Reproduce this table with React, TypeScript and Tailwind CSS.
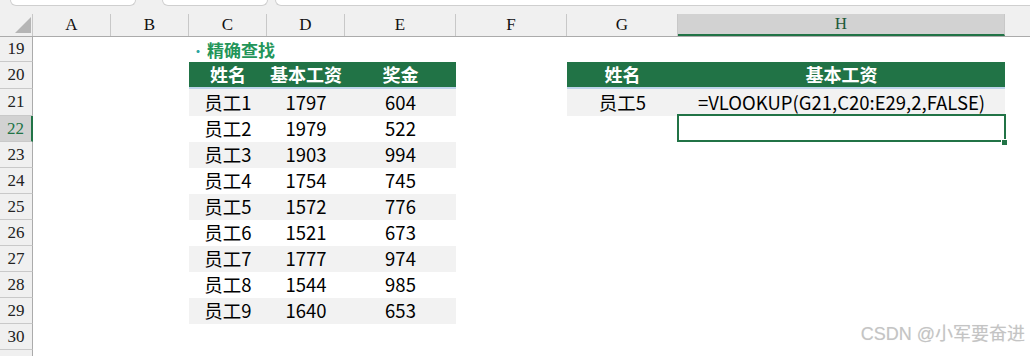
const COLS = [
  { key: "A", w: "w-[78px]" },
  { key: "B", w: "w-[78px]" },
  { key: "C", w: "w-[78px]" },
  { key: "D", w: "w-[78px]" },
  { key: "E", w: "w-[111px]" },
  { key: "F", w: "w-[111px]" },
  { key: "G", w: "w-[111px]" },
  { key: "H", w: "w-[327px]" },
];

const DATA = [
  ["员工1", "1797", "604"],
  ["员工2", "1979", "522"],
  ["员工3", "1903", "994"],
  ["员工4", "1754", "745"],
  ["员工5", "1572", "776"],
  ["员工6", "1521", "673"],
  ["员工7", "1777", "974"],
  ["员工8", "1544", "985"],
  ["员工9", "1640", "653"],
];

const cjk = { fontFamily: '"Noto Sans CJK SC", "Noto Sans", sans-serif' };
const serif = { fontFamily: '"Liberation Serif", "DejaVu Serif", serif' };

function RowHead({ n, h, active }: { n: number; h: string; active?: boolean }) {
  return (
    <div
      className={`${h} w-[33px] shrink-0 flex items-center justify-center text-[17px] border-b border-[#c9c9c9] ${
        active
          ? "bg-[#d2d2d2] text-[#217346] border-r-2 border-r-[#217346]"
          : "bg-[#f0f0f0] text-[#222] border-r border-r-[#ababab]"
      }`}
      style={serif}
    >
      {n}
    </div>
  );
}

function Cell({
  w,
  className = "",
  children,
}: {
  w: string;
  className?: string;
  children?: React.ReactNode;
}) {
  return (
    <div className={`${w} shrink-0 h-full flex items-center justify-center ${className}`}>
      {children}
    </div>
  );
}

export default function App() {
  const heights = ["h-[25px]", "h-[27px]", "h-[27px]", "h-[26px]", "h-[26px]", "h-[26px]", "h-[26px]", "h-[26px]", "h-[26px]", "h-[26px]", "h-[26px]", "h-[26px]", "h-[26px]"];

  return (
    <div className="w-[1030px] h-[356px] overflow-hidden bg-white relative" style={cjk}>
      {/* top strip with boxes */}
      <div className="h-[14px] bg-[#f0f0f0] flex items-start">
        <div className="ml-[10px] w-[126px] h-[6px] bg-white border border-t-0 border-[#cfcfcf] rounded-b-[6px]" />
        <div className="ml-[26px] w-[106px] h-[6px] bg-white border border-t-0 border-[#cfcfcf] rounded-b-[6px]" />
        <div className="ml-[7px] flex-1 h-[6px] bg-white border border-t-0 border-r-0 border-[#cfcfcf] rounded-bl-[6px]" />
      </div>

      {/* column header */}
      <div className="h-[23px] flex bg-[#f0f0f0] border-b border-[#ababab]" style={serif}>
        <div className="w-[33px] shrink-0 relative border-r border-[#c8c8c8]">
          <svg width="16" height="16" className="absolute left-[15px] top-[3px]">
            <polygon points="16,0 16,16 0,16" fill="#b5b5b5" />
          </svg>
        </div>
        {COLS.map((c) =>
          c.key === "H" ? (
            <div
              key={c.key}
              className={`${c.w} shrink-0 flex items-center justify-center text-[17px] bg-[#d2d2d2] text-[#1d5a38] border-b-2 border-[#217346] border-r border-r-[#c8c8c8]`}
            >
              {c.key}
            </div>
          ) : (
            <div
              key={c.key}
              className={`${c.w} shrink-0 flex items-center justify-center text-[17px] text-[#111] border-r border-[#c8c8c8]`}
            >
              {c.key}
            </div>
          )
        )}
        <div className="flex-1" />
      </div>

      {/* rows 19..31 */}
      {heights.map((h, i) => {
        const rowNo = 19 + i;
        const dataIdx = rowNo - 21;
        const d = dataIdx >= 0 && dataIdx < DATA.length ? DATA[dataIdx] : null;
        const zebra = d && dataIdx % 2 === 0 ? "bg-[#f2f2f2]" : "";
        return (
          <div key={rowNo} className={`${h} flex`}>
            <RowHead n={rowNo} h={h} active={rowNo === 22} />
            <Cell w="w-[78px]" />
            <Cell w="w-[78px]" />
            {rowNo === 19 ? (
              <div className="w-[78px] shrink-0 h-full relative">
                <div className="absolute left-[3px] top-[1px] whitespace-nowrap text-[17px] font-bold text-[#239559] leading-[24px]">
                  <span className="text-[12px] align-middle mr-[3px] text-[#2aa6a0]">·</span>精确查找
                </div>
              </div>
            ) : rowNo === 20 ? (
              <>
                <Cell w="w-[78px]" className="bg-[#217346] text-white font-bold text-[18px] border-b-2 border-[#bdd4ea]">姓名</Cell>
                <Cell w="w-[78px]" className="bg-[#217346] text-white font-bold text-[18px] border-b-2 border-[#bdd4ea]">基本工资</Cell>
                <Cell w="w-[111px]" className="bg-[#217346] text-white font-bold text-[18px] border-b-2 border-[#bdd4ea]">奖金</Cell>
              </>
            ) : d ? (
              <>
                <Cell w="w-[78px]" className={`${zebra} text-[18.5px] text-black`}>{d[0]}</Cell>
                <Cell w="w-[78px]" className={`${zebra} text-[18.5px] text-black`}>{d[1]}</Cell>
                <Cell w="w-[111px]" className={`${zebra} text-[18.5px] text-black`}>{d[2]}</Cell>
              </>
            ) : (
              <>
                <Cell w="w-[78px]" />
                <Cell w="w-[78px]" />
                <Cell w="w-[111px]" />
              </>
            )}
            <Cell w="w-[111px]" />
            {rowNo === 20 ? (
              <>
                <Cell w="w-[111px]" className="bg-[#217346] text-white font-bold text-[18px] border-b-2 border-[#bdd4ea]">姓名</Cell>
                <Cell w="w-[327px]" className="bg-[#217346] text-white font-bold text-[18px] border-b-2 border-[#bdd4ea]">基本工资</Cell>
              </>
            ) : rowNo === 21 ? (
              <>
                <Cell w="w-[111px]" className="bg-[#f2f2f2] text-[18.5px] text-black">员工5</Cell>
                <Cell w="w-[327px]" className="bg-[#f2f2f2] text-[18.5px] text-black">=VLOOKUP(G21,C20:E29,2,FALSE)</Cell>
              </>
            ) : rowNo === 22 ? (
              <>
                <Cell w="w-[111px]" />
                <div className="w-[327px] shrink-0 h-full relative">
                  <div className="absolute -left-[1px] -top-[2px] w-[329px] h-[28px] border-2 border-[#217346]" />
                  <div className="absolute right-[-3px] bottom-[-4px] w-[7px] h-[7px] bg-[#217346] border border-white" />
                </div>
              </>
            ) : (
              <>
                <Cell w="w-[111px]" />
                <Cell w="w-[327px]" />
              </>
            )}
          </div>
        );
      })}

      {/* watermark */}
      <div
        className="absolute right-[5px] bottom-[8px] text-[18px] text-[#c4c4c4] whitespace-nowrap"
        style={{ fontFamily: '"Liberation Sans", "Noto Sans CJK SC", sans-serif', textShadow: "0 0 1px #e8e8e8" }}
      >
        CSDN @小军要奋进
      </div>
    </div>
  );
}
